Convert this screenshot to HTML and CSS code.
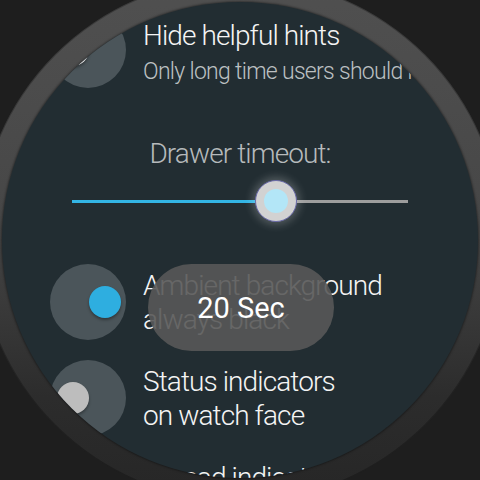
FILE: index.html
```html
<!DOCTYPE html>
<html lang="en">
<head>
  <meta charset="UTF-8" />
  <meta name="viewport" content="width=device-width, initial-scale=1.0" />
  <title>Watch settings</title>
  <link rel="stylesheet" href="styles.css">
</head>
<body>
  <div class="bezel">
    <div class="screen">
      <div class="row first">
        <div class="toggle"><span class="dot off light"></span></div>
        <div class="text">
          <div class="title">Hide helpful hints</div>
          <div class="subtitle">Only long time users should not need them</div>
        </div>
      </div>

      <div class="slider-block">
        <div class="slider-label">Drawer timeout:</div>
        <div class="slider">
          <div class="track-fill" style="width: 204px"></div>
          <div class="thumb" style="left: 204px"><span class="thumb-core"></span></div>
        </div>
      </div>

      <div class="row">
        <div class="toggle"><span class="dot on"></span></div>
        <div class="text">
          <div class="title">Ambient background<br>always black</div>
        </div>
      </div>

      <div class="row">
        <div class="toggle"><span class="dot off"></span></div>
        <div class="text">
          <div class="title">Status indicators<br>on watch face</div>
        </div>
      </div>

      <div class="row">
        <div class="toggle"><span class="dot on"></span></div>
        <div class="text">
          <div class="title">Unread indicators<br>on watch face</div>
        </div>
      </div>

      <div class="toast">20 Sec</div>
    </div>
  </div>
</body>
</html>
```

FILE: styles.css
```css
body {
  margin: 0;
  width: 480px;
  height: 480px;
  overflow: hidden;
  background: #1e1e1e;
  display: flex;
  align-items: center;
  justify-content: center;
  font-family: Roboto, "Liberation Sans", sans-serif;
}
.bezel {
  flex: none;
  width: 476px;
  height: 476px;
  padding: 24px;
  border-radius: 50%;
  background: linear-gradient(to bottom, #505050 0%, #474747 45%, #2c2c2c 80%, #262626 100%);
  box-shadow: inset 0 0 0 1px rgba(0,0,0,0.25);
}
.screen {
  position: relative;
  width: 476px;
  height: 476px;
  border-radius: 50%;
  overflow: hidden;
  background: #222d32;
  box-shadow: 0 0 2px 1px rgba(0,0,0,0.35);
}
.row {
  display: flex;
  align-items: flex-start;
  padding-left: 48px;
  margin-top: 20px;
}
.row.first {
  margin-top: 10px;
}
.toggle {
  flex: none;
  position: relative;
  width: 76px;
  height: 76px;
  border-radius: 50%;
  background: #4b555a;
}
.dot {
  position: absolute;
  top: 22px;
  width: 32px;
  height: 32px;
  border-radius: 50%;
  box-shadow: 0 2px 3px rgba(0,0,0,0.35);
}
.dot.on {
  left: 39px;
  background: #2eaee0;
}
.dot.off {
  left: 7px;
  background: #bdbdbd;
}
.dot.light {
  background: #e6e6e6;
}
.text {
  margin-left: 17px;
  padding-top: 5px;
  width: 275px;
  overflow: hidden;
  white-space: nowrap;
}
.row.first .text {
  padding-top: 7px;
}
.title {
  font-size: 28px;
  line-height: 34px;
  font-weight: 300;
  letter-spacing: -0.9px;
  color: #f4f4f4;
}
.subtitle {
  margin-top: 4px;
  font-size: 23px;
  line-height: 30px;
  font-weight: 300;
  letter-spacing: -0.7px;
  color: #bcc0c2;
}
.slider-block {
  margin-top: 49px;
}
.slider-label {
  text-align: center;
  font-size: 28px;
  line-height: 34px;
  font-weight: 300;
  letter-spacing: -0.9px;
  color: #b6babc;
}
.slider {
  position: relative;
  width: 336px;
  height: 3px;
  margin: 29px auto 0;
  background: #9e9e9e;
}
.track-fill {
  height: 3px;
  background: #33b5e5;
}
.thumb {
  position: absolute;
  top: -20px;
  width: 40px;
  height: 40px;
  margin-left: -21px;
  border-radius: 50%;
  background: #d2d2d2;
  border: 1px solid #6a6aa8;
  box-shadow: 0 0 8px 3px rgba(255,255,255,0.22);
  display: flex;
  align-items: center;
  justify-content: center;
}
.thumb-core {
  width: 24px;
  height: 24px;
  border-radius: 50%;
  background: #b3e6f7;
}
.slider-block + .row {
  margin-top: 61px;
}
.toast {
  position: absolute;
  left: 146px;
  top: 262px;
  width: 186px;
  height: 87px;
  border-radius: 44px;
  background: rgba(88,88,88,0.9);
  color: #ffffff;
  font-size: 29px;
  display: flex;
  align-items: center;
  justify-content: center;
}
```
